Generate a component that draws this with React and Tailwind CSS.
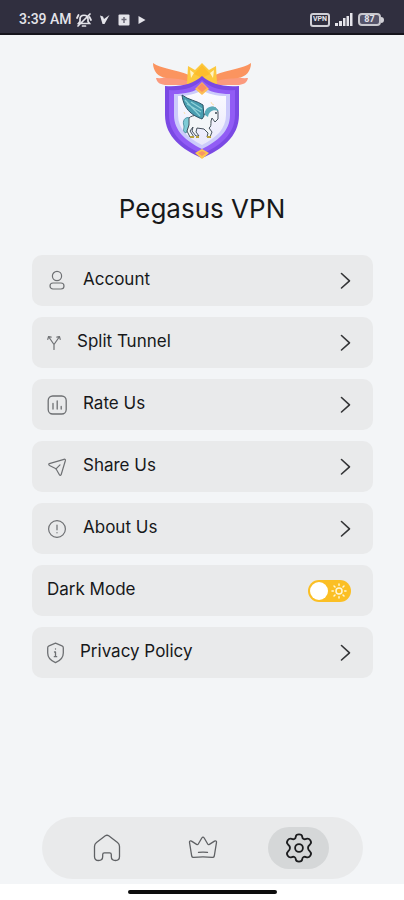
import React, { useState } from 'react';

const AccountIcon = () => (
    <svg width="20" height="22" viewBox="0 0 20 22" fill="none" stroke="currentColor" strokeWidth="1.2">
        <circle cx="10" cy="6" r="4.6" />
        <rect x="3" y="13" width="14" height="6" rx="3" />
    </svg>
);

const SplitIcon = () => (
    <svg width="14" height="20" viewBox="0 0 14 20" fill="none" stroke="currentColor" strokeWidth="1.2" strokeLinecap="round" strokeLinejoin="round">
        <path d="M7 16.5V11.5L1.8 4M7 11.5L12.2 4" />
        <path d="M0.8 6.3L1.5 3.7L4.2 4.2M13.2 6.3L12.5 3.7L9.8 4.2" />
    </svg>
);

const RateIcon = () => (
    <svg width="20" height="20" viewBox="0 0 20 20" fill="none" stroke="currentColor" strokeWidth="1.3" strokeLinecap="round">
        <rect x="1.2" y="1" width="18" height="18" rx="4.5" />
        <path d="M6 8.5V14M10.2 6V14M14.2 11.5V14" />
    </svg>
);

const ShareIcon = () => (
    <svg width="20" height="20" viewBox="0 0 20 20" fill="none" stroke="currentColor" strokeWidth="1.2" strokeLinejoin="round" strokeLinecap="round">
        <path d="M2.3 6.6L17 2.3C18 2 18.6 2.6 18.4 3.5L14.2 17.5C13.9 18.5 12.9 18.6 12.4 17.7L9 11.8L2.5 8.5C1.6 8 1.5 6.9 2.3 6.6Z" />
        <path d="M9 11.8L13 7.8" />
    </svg>
);

const AboutIcon = () => (
    <svg width="20" height="20" viewBox="0 0 20 20" fill="none" stroke="currentColor" strokeWidth="1.2" strokeLinecap="round">
        <circle cx="10" cy="10" r="8.4" />
        <path d="M10 6V10.8M10 13.6V13.8" />
    </svg>
);

const PrivacyIcon = () => (
    <svg width="17" height="22" viewBox="0 0 17 22" fill="none" stroke="currentColor" strokeWidth="1.3" strokeLinecap="round" strokeLinejoin="round">
        <path d="M8.5 1.2L15 3.8Q16.3 4.3 16.3 5.7V11C16.3 15.5 13 18.8 8.5 20.6C4 18.8 0.7 15.5 0.7 11V5.7Q0.7 4.3 2 3.8Z" />
        <path d="M8.5 10V14.5M8.5 6.8V7M7.5 10H8.5M7.3 14.7H9.7" />
    </svg>
);

const Chevron = () => (
    <svg width="11" height="18" viewBox="0 0 11 18" fill="none" stroke="currentColor" strokeWidth="1.6" strokeLinecap="round" strokeLinejoin="round">
        <path d="M1.5 1.5L9.5 8.8L1.5 16" />
    </svg>
);

const SunIcon = () => (
    <svg width="16" height="16" viewBox="0 0 16 16" fill="none" stroke="currentColor" strokeWidth="1.5" strokeLinecap="round">
        <circle cx="8" cy="8" r="3" />
        <path d="M8 1V2.3M8 13.7V15M1 8H2.3M13.7 8H15M3 3L4 4M12 12L13 13M3 13L4 12M12 4L13 3" />
    </svg>
);

const HomeIcon = () => (
    <svg width="28" height="28" viewBox="0 0 28 28" fill="none" stroke="currentColor" strokeWidth="1.3" strokeLinejoin="round">
        <path d="M1.5 12.5Q1.5 10 3.5 8.5L12.3 1.8Q14 0.7 15.7 1.8L24.5 8.5Q26.5 10 26.5 12.5V22.5Q26.5 26.5 22.5 26.5Q18.3 26.5 18.3 22.5V20.5Q18.3 18.8 16.6 18.8H11.4Q9.7 18.8 9.7 20.5V22.5Q9.7 26.5 5.5 26.5Q1.5 26.5 1.5 22.5Z" />
    </svg>
);

const CrownIcon = () => (
    <svg width="30" height="26" viewBox="0 0 30 26" fill="none" stroke="currentColor" strokeWidth="1.3" strokeLinejoin="round" strokeLinecap="round">
        <path d="M1.5 7.3C1.3 6 2.4 5.4 3.5 6.1L8.6 9.4Q9.7 10 10.3 9L13.8 3Q15 1.300 16.2 3L19.7 9Q20.3 10 21.4 9.4L26.500 6.1C27.600 5.4 28.700 6 28.500 7.3L26.3 21Q25.9 22.600 24.2 22.4Q15 21.3 5.8 22.4Q4.1 22.600 3.7 21Z" />
        <path d="M10.5 17.4Q15 16.8 19.5 17.4" />
    </svg>
);

const GearIcon = () => (
    <svg width="30" height="30" viewBox="0 0 30 30" fill="none" stroke="currentColor" strokeWidth="1.8" strokeLinejoin="round">
        <path d="M11.8 3.6C12 0.7 18 0.7 18.2 3.6C18.4 6 20.3 6.8 22.3 5.9C25.5 4.6 28.4 9.2 26.2 11.2C24.3 12.8 24 13.5 24 15C24 16.5 24.3 17.2 26.2 18.8C28.4 20.8 25.5 25.4 22.3 24.1C20.3 23.2 18.4 24 18.2 26.4C18 29.3 12 29.3 11.8 26.4C11.6 24 9.7 23.2 7.7 24.1C4.5 25.4 1.6 20.8 3.8 18.8C5.7 17.2 6 16.5 6 15C6 13.5 5.7 12.8 3.8 11.2C1.6 9.2 4.5 4.6 7.7 5.9C9.7 6.8 11.6 6 11.8 3.6Z" />
        <circle cx="15" cy="15" r="3.9" />
    </svg>
);

const Logo = () => (
    <svg width="102" height="102" viewBox="0 0 102 102" role="img" aria-label="Pegasus VPN logo">
        <defs>
            <linearGradient id="face" x1="0" y1="0" x2="0" y2="1">
                <stop offset="0" stopColor="#fbfbff" />
                <stop offset="1" stopColor="#e9e8fb" />
            </linearGradient>
        </defs>

        {/* Wings */}
        <path d="M5 17C14 18 24 14 38 14L40 24H16C10 24 6 22 5 17ZM97 17C88 18 78 14 64 14L62 24H86C92 24 96 22 97 17Z" fill="#fb9a7e" />
        <path d="M2 2C10 8 24 8 38 14L36 20C28 17 21 18 15 17C7 16 2 10 2 2ZM100 2C92 8 78 8 64 14L66 20C74 17 81 18 87 17C95 16 100 10 100 2Z" fill="#fb945f" />

        {/* Crown */}
        <path d="M37 5L44 9L51 2L58 9L65 5L66 23H36Z" fill="#fcc93f" />
        <path d="M43 13L51 4L59 13L51 17Z" fill="#fdbd2c" />
        <path d="M39 9L43 12L40 17ZM63 9L59 12L62 17Z" fill="#fff3c4" />

        {/* Shield */}
        <path d="M14 25C31 26 42 23 51 15C60 23 71 26 88 25V54C88 76 70 89 51 97C32 89 14 76 14 54Z" fill="#7a49e4" />
        <path d="M18 29C32 30 43 27 51 19C59 27 70 30 84 29V54C84 73 69 85 51 93C33 85 18 73 18 54Z" fill="#915cf5" />
        <path d="M23 33C34 33 44 31 51 25C58 31 68 33 79 33V54C79 70 67 80 51 88C35 80 23 70 23 54Z" fill="#cccbfb" />
        <path d="M27 35C36 35 45 33 51 29C57 33 66 35 75 35V54C75 68 65 77 51 84C37 77 27 68 27 54Z" fill="url(#face)" />
        <path d="M51 21L58 28L51 34L44 28Z" fill="#fdbd55" />
        <path d="M51 22L56 27L51 31L46 27Z" fill="#f98f62" />
        <path d="M44 92L51 88L58 92L51 98Z" fill="#fdc94d" />
        <path d="M47 92L51 90L55 92L51 95Z" fill="#f89663" />

        {/* Pegasus */}
        <path d="M39 57C34 55 31 60 33 65C33 69 31 70 35 72C38 68 37 64 40 61Z" fill="#7ecbd6" stroke="#3b8296" strokeWidth="0.8" />
        <path d="M38 57C42 53 49 55 53 54C55 52 55 48 59 47C63 45 66 47 67 51L67 58L64 61L61 57L60 60C60 64 60 66 58 67L61 71L59 76H56L57 72L53 68L46 67L45 71L48 75H45L41 70L42 66L39 70L43 76H39L36 70L38 64Z" fill="#f3f6f8" stroke="#45515c" strokeWidth="1" strokeLinejoin="round" />
        <path d="M54 54C53 48 58 44 64 46L68 50C62 48 58 50 57 56Z" fill="#5aabba" />
        <path d="M51 58C43 55 33 50 31 34C37 39 47 40 52 44L53 55Z" fill="#489db0" stroke="#2c5265" strokeWidth="1" strokeLinejoin="round" />
        <path d="M34 39L49 55M36 43L50 51M40 41L51 48" stroke="#8fd2d8" strokeWidth="1.2" fill="none" />
        <circle cx="65" cy="52" r="0.9" fill="#26323c" />
        <path d="M39 76H43M45 76H48M56 76H60" stroke="#b9a13e" strokeWidth="2" />
        <path d="M60 41L61 43L63 44M33 51L34 53" stroke="#fbd998" strokeWidth="0.8" fill="none" />
    </svg>
);

const StatusBar = () => (
    <header className="bg-[#302f3f] border-b-2 border-[#15141c] h-[35px] pt-[6px] pl-[19px] pr-[20px] flex items-center justify-between text-[#e4e4ea]">
        <div className="flex items-center">
            <span className="font-[Roboto,sans-serif] text-[14px] font-medium">3:39 AM</span>
            <svg className="ml-1" width="16" height="16" viewBox="0 0 16 16" fill="none" stroke="currentColor" strokeWidth="1.7" strokeLinecap="round">
                <path d="M2.500 11.500H13.500L12 9.500V7C12 2 4 2 4 7V9.500ZM6.500 14H9.500M14 2L2 14M1 6L2.500 3M15 8L13.500 5" />
            </svg>
            <svg className="ml-2" width="10" height="12" viewBox="0 0 10 12" fill="currentColor">
                <path d="M0 1.500L3 2.500L4 5L9.500 1L4.500 10H2.500Z" />
            </svg>
            <svg className="ml-2" width="12" height="12" viewBox="0 0 12 12">
                <rect x="0.5" y="0.5" width="11" height="11" rx="1" fill="currentColor" />
                <path d="M6 3V9M3.5 5.5H8.5" stroke="#6b6a78" strokeWidth="1.5" />
            </svg>
            <svg className="ml-2" width="8" height="10" viewBox="0 0 8 10">
                <path d="M0.5 1L7.5 5L0.5 9Z" fill="currentColor" />
            </svg>
        </div>
        <div className="flex items-center gap-[5px]">
            <span className="w-[20px] h-[14px] rounded-[3px] border-2 border-[#d0d0d6] flex items-center justify-center font-[Roboto,sans-serif] text-[7px] leading-none font-bold">VPN</span>
            <svg width="18" height="13" viewBox="0 0 18 13" fill="currentColor">
                <path d="M0 10H3V13H0ZM4 8H7V13H4ZM8 5H10.5V13H8ZM11.5 3H14V13H11.5ZM15 0H17.5V13H15Z" />
            </svg>
            <div className="flex items-center">
                <span className="w-[23px] h-[13px] rounded-[4px] border-2 border-[#c8c8ce] bg-[#55546a] flex items-center justify-center font-[Roboto,sans-serif] text-[9px] leading-none font-bold">87</span>
                <span className="w-[3px] h-[6px] rounded-r-full bg-[#d0d0d6]" />
            </div>
        </div>
    </header>
);

const rowStyle = 'w-full h-[51px] rounded-[10px] bg-[#e9eaeb] pl-[15px] pr-[22px] flex items-center justify-between';
const textStyle = 'pb-1 text-[17px] leading-6 text-[#17181a]';

const MenuRow = ({ icon: Icon, label }) => (
    <li>
        <button type="button" className={rowStyle}>
            <span className="flex items-center gap-4 text-[#6e7073]">
                <Icon />
                <span className={textStyle}>{label}</span>
            </span>
            <span className="text-[#333436]"><Chevron /></span>
        </button>
    </li>
);

const DarkModeRow = () => {
    const [dark, setDark] = useState(false);

    return (
        <li>
            <label className={rowStyle}>
                <span className={textStyle}>Dark Mode</span>
                <input type="checkbox" role="switch" className="peer sr-only" checked={dark} onChange={e => setDark(e.target.checked)} />
                <span className="w-[43px] h-[22px] rounded-full bg-[#fbbf24] px-[2px] flex items-center justify-between text-[#fff7d6] peer-checked:flex-row-reverse peer-checked:bg-gray-600">
                    <span className="size-[18px] rounded-full bg-white" />
                    <span className="pr-[2px]"><SunIcon /></span>
                </span>
            </label>
        </li>
    );
};

const tabs = [
    { name: 'Home', icon: HomeIcon },
    { name: 'Premium', icon: CrownIcon },
    { name: 'Settings', icon: GearIcon, active: true },
];

const App = () => (
    <div className="min-h-screen flex flex-col bg-white font-[Inter,sans-serif]">
        <StatusBar />

        <main className="flex-1 flex flex-col bg-[#f3f5f7]">
            <div className="flex flex-col items-center pt-[26px]">
                <Logo />
                <h1 className="mt-7 text-[26px] leading-9 text-[#17181a]">Pegasus VPN</h1>
            </div>

            {/* Settings list */}
            <ul className="mt-7 ml-8 mr-[31px] flex flex-col gap-[11px]">
                <MenuRow icon={AccountIcon} label="Account" />
                <MenuRow icon={SplitIcon} label="Split Tunnel" />
                <MenuRow icon={RateIcon} label="Rate Us" />
                <MenuRow icon={ShareIcon} label="Share Us" />
                <MenuRow icon={AboutIcon} label="About Us" />
                <DarkModeRow />
                <MenuRow icon={PrivacyIcon} label="Privacy Policy" />
            </ul>

            {/* Bottom navigation */}
            <nav className="mt-auto ml-[42px] mr-[41px] mb-[5px] h-[62px] rounded-full bg-[#e9eaeb] px-[34px] flex items-center justify-between">
                {tabs.map(({ name, icon: Icon, active }) => (
                    <button
                        key={name}
                        type="button"
                        aria-label={name}
                        className={`w-[61px] h-[42px] rounded-full flex items-center justify-center ${active ? 'bg-[#d5d7d8] text-[#1b1c1e]' : 'text-[#5f6164]'}`}
                    >
                        <Icon />
                    </button>
                ))}
            </nav>
        </main>

        <div className="h-4 flex justify-center pt-[6px]">
            <span className="w-[149px] h-[4px] rounded-full bg-[#0d0d0d]" />
        </div>
    </div>
);

export default App;
